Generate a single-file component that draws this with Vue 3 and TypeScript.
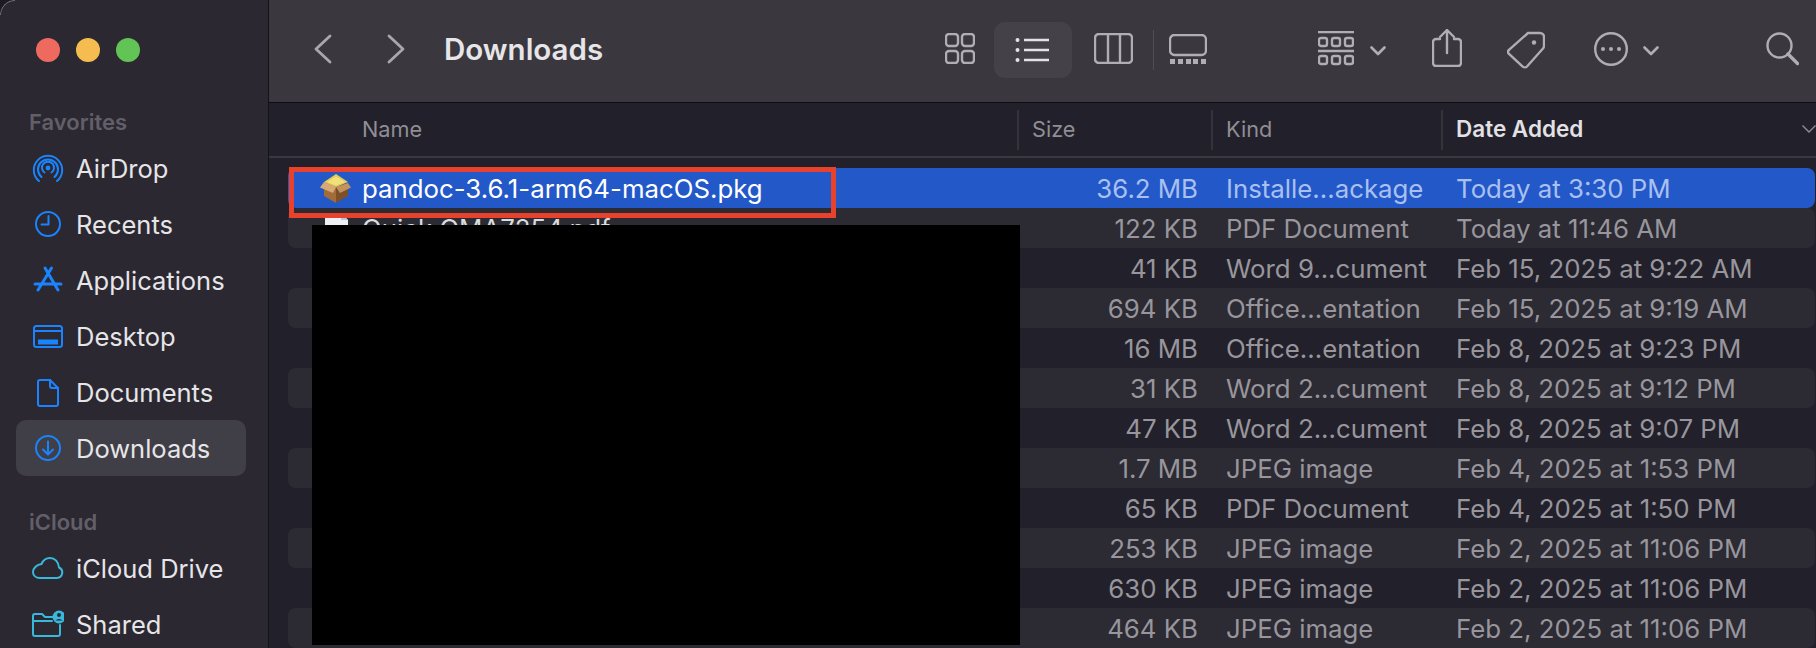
<script setup lang="ts">
interface SideItem {
  label: string
  icon: string
  active?: boolean
}

interface FileRow {
  name: string
  size: string
  kind: string
  date: string
}

const favorites: SideItem[] = [
  { label: 'AirDrop', icon: 'airdrop' },
  { label: 'Recents', icon: 'recents' },
  { label: 'Applications', icon: 'apps' },
  { label: 'Desktop', icon: 'desktop' },
  { label: 'Documents', icon: 'documents' },
  { label: 'Downloads', icon: 'downloads', active: true },
]

const icloud: SideItem[] = [
  { label: 'iCloud Drive', icon: 'cloud' },
  { label: 'Shared', icon: 'shared' },
]

const files: FileRow[] = [
  { name: 'pandoc-3.6.1-arm64-macOS.pkg', size: '36.2 MB', kind: 'Installe...ackage', date: 'Today at 3:30 PM' },
  { name: 'Quick QMA7254.pdf', size: '122 KB', kind: 'PDF Document', date: 'Today at 11:46 AM' },
  { name: '', size: '41 KB', kind: 'Word 9...cument', date: 'Feb 15, 2025 at 9:22 AM' },
  { name: '', size: '694 KB', kind: 'Office...entation', date: 'Feb 15, 2025 at 9:19 AM' },
  { name: '', size: '16 MB', kind: 'Office...entation', date: 'Feb 8, 2025 at 9:23 PM' },
  { name: '', size: '31 KB', kind: 'Word 2...cument', date: 'Feb 8, 2025 at 9:12 PM' },
  { name: '', size: '47 KB', kind: 'Word 2...cument', date: 'Feb 8, 2025 at 9:07 PM' },
  { name: '', size: '1.7 MB', kind: 'JPEG image', date: 'Feb 4, 2025 at 1:53 PM' },
  { name: '', size: '65 KB', kind: 'PDF Document', date: 'Feb 4, 2025 at 1:50 PM' },
  { name: '', size: '253 KB', kind: 'JPEG image', date: 'Feb 2, 2025 at 11:06 PM' },
  { name: '', size: '630 KB', kind: 'JPEG image', date: 'Feb 2, 2025 at 11:06 PM' },
  { name: '', size: '464 KB', kind: 'JPEG image', date: 'Feb 2, 2025 at 11:06 PM' },
]
</script>

<template>
  <div class="finder">
    <aside class="sidebar">
      <div class="lights">
        <span class="light red"></span>
        <span class="light yellow"></span>
        <span class="light green"></span>
      </div>

      <div class="side-label">Favorites</div>
      <div v-for="item in favorites" :key="item.label" class="side-item" :class="{ active: item.active }">
        <svg class="side-icon" viewBox="0 0 32 32" fill="none" stroke="currentColor" stroke-width="2" stroke-linecap="round" stroke-linejoin="round">
          <template v-if="item.icon === 'airdrop'">
            <circle cx="16" cy="16" r="2.400" fill="currentColor" stroke="none" />
            <path d="M12.500 20.500a6 6 0 1 1 7 0" />
            <path d="M9.500 25a10 10 0 1 1 13 0" />
            <path d="M7 29a14.200 14.200 0 1 1 18 0" />
          </template>
          <template v-else-if="item.icon === 'recents'">
            <circle cx="16" cy="16" r="12" />
            <path d="M16.500 8v8.500h-7" />
          </template>
          <template v-else-if="item.icon === 'apps'">
            <path d="M13 4l13 22M19.500 4L6 26M3 20h26" stroke-width="3" />
          </template>
          <template v-else-if="item.icon === 'desktop'">
            <rect x="2" y="6" width="28" height="21" rx="2.500" />
            <path d="M2 11h28" />
            <rect x="6" y="19.500" width="20" height="5" fill="currentColor" stroke="none" />
          </template>
          <template v-else-if="item.icon === 'documents'">
            <path d="M6 6a2 2 0 0 1 2-2h10l8 8v16a2 2 0 0 1-2 2H8a2 2 0 0 1-2-2z" />
            <path d="M18 4v6a2 2 0 0 0 2 2h6" />
          </template>
          <template v-else>
            <circle cx="16" cy="16" r="12" />
            <path d="M16 9.500v12.500M11 17.500l5 5 5-5" />
          </template>
        </svg>
        <span>{{ item.label }}</span>
      </div>

      <div class="side-label second">iCloud</div>
      <div v-for="item in icloud" :key="item.label" class="side-item cyan">
        <svg class="side-icon" viewBox="0 0 32 32" fill="none" stroke="currentColor" stroke-width="2" stroke-linecap="round" stroke-linejoin="round">
          <template v-if="item.icon === 'cloud'">
            <path d="M8 26h17a5.500 5.500 0 0 0 2-10.500C26.500 10 23 6 18 6c-4 0-7 2.500-8.500 6C5 12.500 1 16 1 20c0 3.500 3 6 7 6z" />
          </template>
          <template v-else>
            <path d="M1 13V8a2 2 0 0 1 2-2h7l3 3h8M1 13h19M1 13v13a2 2 0 0 0 2 2h23a2 2 0 0 0 2-2V17" />
            <circle cx="27" cy="9" r="6.500" fill="currentColor" stroke="none" />
            <circle cx="27" cy="7" r="2" fill="#2b2831" stroke="none" />
            <path d="M23.500 12.500a4 3 0 0 1 7 0z" fill="#2b2831" stroke="none" />
          </template>
        </svg>
        <span>{{ item.label }}</span>
      </div>
    </aside>

    <main class="main">
      <header class="toolbar">
        <div class="nav">
          <svg width="22" height="32" viewBox="0 0 22 32" fill="none" stroke="#a9a7ac" stroke-width="2.800" stroke-linecap="round" stroke-linejoin="round"><path d="M18 3L4 16l14 13" /></svg>
          <svg class="forward" width="22" height="32" viewBox="0 0 22 32" fill="none" stroke="#a9a7ac" stroke-width="2.800" stroke-linecap="round" stroke-linejoin="round"><path d="M4 3l14 13L4 29" /></svg>
          <span class="title">Downloads</span>
        </div>

        <svg width="30" height="31" viewBox="0 0 30 31" class="tool" fill="none"><rect x="1" y="1" width="12" height="12" rx="3" /><rect x="17" y="1" width="12" height="12" rx="3" /><rect x="1" y="18" width="12" height="12" rx="3" /><rect x="17" y="18" width="12" height="12" rx="3" /></svg>
        <div class="view-active">
          <svg width="36" height="26" viewBox="0 0 36 26" fill="none" stroke="#e4e2e6" stroke-width="2.500"><circle cx="2.500" cy="3" r="2" fill="#e4e2e6" stroke="none" /><circle cx="2.500" cy="13" r="2" fill="#e4e2e6" stroke="none" /><circle cx="2.500" cy="23" r="2" fill="#e4e2e6" stroke="none" /><path d="M9 3h25M9 13h25M9 23h25" /></svg>
        </div>
        <svg width="39" height="31" viewBox="0 0 39 31" class="tool columns" fill="none"><rect x="1" y="1" width="37" height="29" rx="4" /><path d="M14 1v29M26 1v29" /></svg>
        <span class="sep"></span>
        <svg width="38" height="30" viewBox="0 0 38 30" class="tool gallery" fill="none"><rect x="1" y="1" width="36" height="20" rx="4.500" /><g fill="#b0aeb3" stroke="none"><rect x="1" y="25" width="5" height="5" /><rect x="9" y="25" width="5" height="5" /><rect x="17" y="25" width="5" height="5" /><rect x="24" y="25" width="5" height="5" /><rect x="32" y="25" width="5" height="5" /></g></svg>
        <svg width="36" height="35" viewBox="0 0 36 35" class="tool group" fill="none"><path d="M0 1h36M0 20h36" /><rect x="1" y="7" width="8" height="8" rx="2" /><rect x="14" y="7" width="8" height="8" rx="2" /><rect x="27" y="7" width="8" height="8" rx="2" /><rect x="1" y="25" width="8" height="8" rx="2" /><rect x="14" y="25" width="8" height="8" rx="2" /><rect x="27" y="25" width="8" height="8" rx="2" /></svg>
        <svg width="16" height="10" viewBox="0 0 16 10" class="tool chevron" fill="none"><path d="M1.500 1.500L8 8l6.500-6.500" stroke-width="2.600" stroke-linecap="round" stroke-linejoin="round" /></svg>
        <svg width="30" height="38" viewBox="0 0 30 38" class="tool share" fill="none" stroke-linecap="round" stroke-linejoin="round"><path d="M8 10H4a3 3 0 0 0-3 3v21a3 3 0 0 0 3 3h22a3 3 0 0 0 3-3V13a3 3 0 0 0-3-3h-4" /><path d="M15 24V1M8 8l7-7 7 7" /></svg>
        <svg width="38" height="38" viewBox="0 0 38 38" class="tool tag" fill="none"><path d="M21 2h12a4 4 0 0 1 4 4v9a4 4 0 0 1-1.500 3L20 35.500a3 3 0 0 1-4.300 0L2 23a3 3 0 0 1 0-4.200z" /><circle cx="27" cy="11.500" r="2.200" fill="#b0aeb3" stroke="none" /></svg>
        <svg width="34" height="34" viewBox="0 0 34 34" class="tool more" fill="none"><circle cx="17" cy="17" r="15.800" /><g fill="#b0aeb3" stroke="none"><circle cx="9" cy="17" r="2" /><circle cx="17" cy="17" r="2" /><circle cx="25" cy="17" r="2" /></g></svg>
        <svg width="16" height="10" viewBox="0 0 16 10" class="tool chevron more-chevron" fill="none"><path d="M1.500 1.500L8 8l6.500-6.500" stroke-width="2.600" stroke-linecap="round" stroke-linejoin="round" /></svg>
        <svg width="33" height="34" viewBox="0 0 33 34" class="tool search" fill="none" stroke-linecap="round"><circle cx="13.500" cy="13.500" r="12" /><path d="M22 22l9.500 9.500" stroke-width="3.400" /></svg>
      </header>

      <div class="columns-head">
        <div class="head-cell name-head">Name</div>
        <div class="head-cell">Size</div>
        <div class="head-cell">Kind</div>
        <div class="head-cell sorted">
          Date Added
          <svg width="14" height="8" viewBox="0 0 14 8" fill="none" stroke="#8f8d93" stroke-width="1.400"><path d="M.5 .5L7 7l6.500-6.500" /></svg>
        </div>
      </div>

      <div class="list">
        <div v-for="(file, i) in files" :key="i" class="row" :class="{ selected: i === 0, alt: i % 2 === 1 }">
          <div class="cell-name">
            <svg v-if="i === 0" width="32" height="32" viewBox="0 0 32 32">
              <path d="M16 15L28 11V24L16 31Z" fill="#7d5028" />
              <path d="M16 15L4 10V24L16 31Z" fill="#a06c3a" />
              <path d="M4 10L0 15.500L13 21L16 15Z" fill="#d9a877" />
              <path d="M28 11L31 15.500L20 21L16 15Z" fill="#c4925f" />
              <path d="M4 10L16 2L28 10L16 15Z" fill="#e6cc4e" />
              <path d="M7 10L16 4.500L25 10L16 13.500Z" fill="#f2e07a" />
            </svg>
            <svg v-else-if="i === 1" width="32" height="32" viewBox="0 0 32 32">
              <path d="M5 1H21L28 8V31H5Z" fill="#eef0f4" />
              <path d="M21 1L28 8H21Z" fill="#b9c6e6" />
            </svg>
            <span v-if="file.name">{{ file.name }}</span>
          </div>
          <div class="cell-size">{{ file.size }}</div>
          <div class="cell-text">{{ file.kind }}</div>
          <div class="cell-text">{{ file.date }}</div>
        </div>
      </div>
    </main>

    <div class="corner"></div>
    <div class="redaction"></div>
    <div class="highlight"></div>
  </div>
</template>

<style>
html,
body {
  margin: 0;
  background: #1d1b21;
}
</style>

<style scoped>
.finder {
  position: relative;
  display: flex;
  width: 1816px;
  height: 648px;
  overflow: hidden;
  border-top-left-radius: 15px;
  font-family: Inter, "Liberation Sans", sans-serif;
  font-size: 25.500px;
  color: #e6e5e8;
  background: #2b2831;
}

.corner {
  position: absolute;
  left: 0;
  top: 0;
  width: 15px;
  height: 15px;
  box-sizing: border-box;
  border-top: 1px solid #77757b;
  border-left: 1px solid #77757b;
  border-top-left-radius: 15px;
}

.sidebar {
  flex: none;
  width: 268px;
  box-sizing: border-box;
  padding: 38px 22px 0 16px;
  background: #2b2831;
}

.lights {
  display: flex;
  gap: 16px;
  padding-left: 20px;
}

.light {
  width: 24px;
  height: 24px;
  border-radius: 50%;
}

.red { background: #ee6a5f; }
.yellow { background: #f5bd4f; }
.green { background: #61c454; }

.side-label {
  height: 24px;
  line-height: 24px;
  margin: 48px 0 6px 13px;
  font-size: 22px;
  font-weight: 600;
  color: #625f69;
}

.side-label.second {
  margin-top: 34px;
}

.side-item {
  display: flex;
  align-items: center;
  height: 56px;
  padding-left: 16px;
  border-radius: 10px;
  color: #1a84ff;
}

.side-item span {
  margin-left: 12px;
  color: #e6e5e8;
}

.side-item.active {
  background: #403e46;
}

.side-item.cyan {
  color: #38b9dc;
}

.side-icon {
  flex: none;
  width: 32px;
  height: 32px;
}

.main {
  flex: 1;
  display: flex;
  flex-direction: column;
  min-width: 0;
  border-left: 1px solid #131216;
  background: #22202a;
}

.toolbar {
  flex: none;
  display: flex;
  align-items: center;
  height: 102px;
  border-bottom: 1px solid #0d0c10;
  background: #3a383e;
}

.nav {
  flex: none;
  display: flex;
  align-items: center;
  width: 676px;
  padding-left: 43px;
  margin-bottom: 4px;
  box-sizing: border-box;
}

.forward {
  margin-left: 51px;
}

.title {
  margin-left: 37px;
  font-size: 29.500px;
  font-weight: 600;
  color: #e6e5e8;
}

.tool {
  flex: none;
  margin-bottom: 5px;
  stroke: #b0aeb3;
  stroke-width: 2.400;
}

.view-active {
  flex: none;
  display: flex;
  align-items: center;
  justify-content: center;
  width: 78px;
  height: 56px;
  margin-left: 19px;
  margin-bottom: 3px;
  border-radius: 11px;
  background: #444248;
}

.columns { margin-left: 22px; }

.sep {
  flex: none;
  width: 1px;
  height: 40px;
  margin-left: 20px;
  margin-bottom: 3px;
  background: #504e54;
}

.gallery { margin-left: 15px; }
.group { margin-left: 111px; }
.chevron { margin-left: 16px; margin-bottom: 0; }
.share { margin-left: 46px; margin-bottom: 7px; }
.tag { margin-left: 45px; margin-bottom: 3px; }
.more { margin-left: 49px; }
.more-chevron { margin-left: 15px; }
.search { margin-left: 107px; }

.columns-head {
  flex: none;
  display: grid;
  grid-template-columns: 748px 194px 230px 1fr;
  align-items: center;
  height: 53px;
  border-bottom: 2px solid #3b3940;
  font-size: 21.700px;
  color: #908e94;
}

.head-cell {
  display: flex;
  align-items: center;
  height: 38px;
  padding-left: 13px;
  padding-bottom: 2px;
  border-left: 2px solid #35333a;
}

.name-head {
  padding-left: 93px;
  border-left: none;
}

.sorted {
  justify-content: space-between;
  font-size: 22.500px;
  font-weight: 600;
  color: #e2e1e4;
}

.list {
  padding: 10px 1px 0 19px;
}

.row {
  display: grid;
  grid-template-columns: 729px 194px 230px 1fr;
  align-items: center;
  height: 40px;
  border-radius: 8px;
  color: #98969c;
  white-space: nowrap;
  font-size: 25.800px;
}

.row.alt {
  background: #2c2a33;
}

.row.selected {
  background: #2358c9;
  color: #a9c0f0;
}

.cell-name {
  display: flex;
  align-items: center;
  gap: 10px;
  height: 100%;
  padding-left: 32px;
  color: #dcdbde;
  overflow: hidden;
}

.selected .cell-name {
  color: #fff;
}

.cell-size {
  text-align: right;
  padding-right: 13px;
}

.cell-text {
  padding-left: 15px;
}

.redaction {
  position: absolute;
  left: 312px;
  top: 225px;
  width: 708px;
  height: 420px;
  background: #000;
}

.highlight {
  position: absolute;
  left: 289px;
  top: 167px;
  width: 547px;
  height: 51px;
  box-sizing: border-box;
  border: 5px solid #e8412c;
}
</style>
